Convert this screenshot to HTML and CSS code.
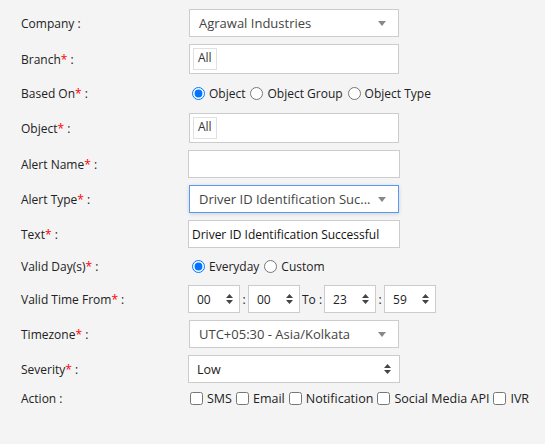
FILE: index.html
```html
<!DOCTYPE html>
<html>
<head>
    <meta name="viewport" content="width=device-width, initial-scale=1.0">
    <title>Alert Settings</title>
    <link rel="stylesheet" href="styles.css">
</head>
<body>
    <form class="alert-form">
        <div class="form-row row-28">
            <label class="form-label">Company :</label>
            <div class="select-box">
                <span class="select-text">Agrawal Industries</span>
                <svg class="caret" width="8" height="5" viewBox="0 0 8 5"><path d="M0 0h8L4 5z" fill="#888"/></svg>
            </div>
        </div>

        <div class="form-row row-30">
            <label class="form-label">Branch<span class="req">*</span> :</label>
            <div class="tag-box"><span class="tag">All</span></div>
        </div>

        <div class="form-row row-25">
            <label class="form-label">Based On<span class="req">*</span> :</label>
            <div class="option-group">
                <label class="option"><input type="radio" name="based" checked> Object</label>
                <label class="option"><input type="radio" name="based"> Object Group</label>
                <label class="option"><input type="radio" name="based"> Object Type</label>
            </div>
        </div>

        <div class="form-row row-30">
            <label class="form-label">Object<span class="req">*</span> :</label>
            <div class="tag-box"><span class="tag">All</span></div>
        </div>

        <div class="form-row row-28">
            <label class="form-label">Alert Name<span class="req">*</span> :</label>
            <input class="text-input" type="text">
        </div>

        <div class="form-row row-28">
            <label class="form-label">Alert Type<span class="req">*</span> :</label>
            <div class="select-box select-focus">
                <span class="select-text">Driver ID Identification Suc...</span>
                <svg class="caret" width="8" height="5" viewBox="0 0 8 5"><path d="M0 0h8L4 5z" fill="#888"/></svg>
            </div>
        </div>

        <div class="form-row row-28">
            <label class="form-label">Text<span class="req">*</span> :</label>
            <input class="text-input" type="text" value="Driver ID Identification Successful">
        </div>

        <div class="form-row row-23">
            <label class="form-label">Valid Day(s)<span class="req">*</span> :</label>
            <div class="option-group">
                <label class="option"><input type="radio" name="days" checked> Everyday</label>
                <label class="option"><input type="radio" name="days"> Custom</label>
            </div>
        </div>

        <div class="form-row row-28">
            <label class="form-label">Valid Time From<span class="req">*</span> :</label>
            <div class="time-group">
                <div class="time-box"><span>00</span><svg width="7" height="10" viewBox="0 0 7 10"><path d="M3.5 0L7 4H0zM3.5 10L0 6h7z" fill="#444"/></svg></div>
                <span class="time-sep">:</span>
                <div class="time-box"><span>00</span><svg width="7" height="10" viewBox="0 0 7 10"><path d="M3.5 0L7 4H0zM3.5 10L0 6h7z" fill="#444"/></svg></div>
                <span class="time-to">To :</span>
                <div class="time-box"><span>23</span><svg width="7" height="10" viewBox="0 0 7 10"><path d="M3.5 0L7 4H0zM3.5 10L0 6h7z" fill="#444"/></svg></div>
                <span class="time-sep">:</span>
                <div class="time-box"><span>59</span><svg width="7" height="10" viewBox="0 0 7 10"><path d="M3.5 0L7 4H0zM3.5 10L0 6h7z" fill="#444"/></svg></div>
            </div>
        </div>

        <div class="form-row row-28">
            <label class="form-label">Timezone<span class="req">*</span> :</label>
            <div class="select-box">
                <span class="select-text">UTC+05:30 - Asia/Kolkata</span>
                <svg class="caret" width="8" height="5" viewBox="0 0 8 5"><path d="M0 0h8L4 5z" fill="#888"/></svg>
            </div>
        </div>

        <div class="form-row row-28">
            <label class="form-label">Severity<span class="req">*</span> :</label>
            <div class="native-select">
                <span>Low</span>
                <svg width="7" height="10" viewBox="0 0 7 10"><path d="M3.5 0L7 4H0zM3.5 10L0 6h7z" fill="#444"/></svg>
            </div>
        </div>

        <div class="form-row row-16">
            <label class="form-label">Action :</label>
            <div class="option-group check-group">
                <label class="option"><input type="checkbox"> SMS</label>
                <label class="option"><input type="checkbox"> Email</label>
                <label class="option"><input type="checkbox"> Notification</label>
                <label class="option"><input type="checkbox"> Social Media API</label>
                <label class="option"><input type="checkbox"> IVR</label>
            </div>
        </div>
    </form>
</body>
</html>
```

FILE: styles.css
```css
body {
    font-family: 'Open Sans', 'Segoe UI', sans-serif;
    font-size: 12px;
    color: #222;
    margin: 0;
    padding: 0;
    background: #f4f4f4;
    min-height: 100vh;
}

.alert-form {
    padding: 9px 0 0 21px;
}

.form-row {
    display: flex;
    align-items: center;
    margin-bottom: 7px;
}

.row-16 { height: 16px; }
.row-23 { height: 23px; }
.row-25 { height: 25px; }
.row-28 { height: 28px; }
.row-30 { height: 30px; }

.form-label {
    width: 167px;
    flex-shrink: 0;
    color: #222;
}

.req {
    color: #f00;
}

.select-box {
    box-sizing: border-box;
    width: 210px;
    height: 100%;
    margin-left: 1px;
    background: white;
    border: 1px solid #ccc;
    display: flex;
    align-items: center;
    justify-content: space-between;
    padding: 0 12px 0 9px;
    font-size: 13px;
    color: #444;
}

.select-focus {
    border-color: #5897fb;
    box-shadow: 0 1px 4px rgba(0,0,0,0.15);
}

.tag-box {
    box-sizing: border-box;
    width: 210px;
    height: 100%;
    margin-left: 1px;
    background: white;
    border: 1px solid #ccc;
    padding: 3px;
    display: flex;
}

.tag {
    border: 1px solid #e0e0e0;
    padding: 0 4px;
    line-height: 18px;
    color: #333;
}

.text-input {
    box-sizing: border-box;
    width: 212px;
    height: 100%;
    margin: 0;
    border: 1px solid #ccc;
    background: white;
    padding: 0 3px;
    font-family: inherit;
    font-size: 12px;
    color: #111;
    outline: none;
}

.option-group {
    display: flex;
    align-items: center;
    gap: 2px;
    margin-left: 1px;
    white-space: nowrap;
}

.check-group {
    gap: 3px;
}

.option {
    display: flex;
    align-items: center;
    font-size: 12px;
    color: #222;
}

.check-group .option {
    font-size: 12.5px;
}

.option input {
    width: 13px;
    height: 13px;
    margin: 0 4px 0 3px;
}

.option input[type="radio"] {
    accent-color: #0075ff;
}

.option input[type="checkbox"] {
    margin: 0 4px 0 1px;
}

.time-group {
    display: flex;
    align-items: center;
    height: 100%;
}

.time-box {
    box-sizing: border-box;
    width: 52px;
    height: 100%;
    background: white;
    border: 1px solid #ccc;
    display: flex;
    align-items: center;
    justify-content: space-between;
    padding: 0 6px 0 8px;
    color: #222;
}

.time-sep {
    width: 8px;
    text-align: center;
}

.time-to {
    padding: 0 2px;
}

.native-select {
    box-sizing: border-box;
    width: 212px;
    height: 100%;
    background: white;
    border: 1px solid #ccc;
    display: flex;
    align-items: center;
    justify-content: space-between;
    padding: 0 8px;
    font-size: 12.5px;
    color: #222;
}
```
